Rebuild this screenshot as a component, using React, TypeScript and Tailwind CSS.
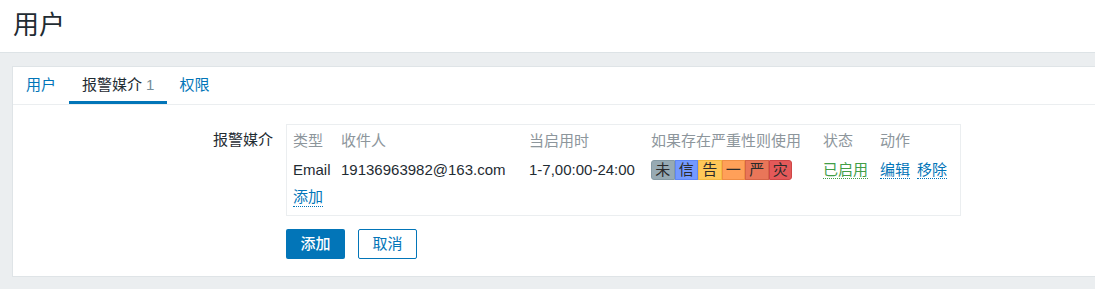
import React from 'react';

const severities = [
  { label: '未', bg: 'bg-[#97aab3]', border: 'border-[#859aa4]' },
  { label: '信', bg: 'bg-[#7499ff]', border: 'border-[#5f87f5]' },
  { label: '告', bg: 'bg-[#ffc859]', border: 'border-[#f2b840]' },
  { label: '一', bg: 'bg-[#ffa059]', border: 'border-[#f08e45]' },
  { label: '严', bg: 'bg-[#e97659]', border: 'border-[#d66447]' },
  { label: '灾', bg: 'bg-[#e45959]', border: 'border-[#cf4646]' },
];

const font = { fontFamily: '"Liberation Sans", Arial, "Noto Sans CJK SC", sans-serif' };

export default function App() {
  return (
    <div style={font} className="w-[1095px] h-[289px] bg-[#ebeef0] text-[15px] text-[#1f2c33] overflow-hidden">
      <header className="h-[53px] bg-white border-b border-[#dde3e6] flex items-center pl-[13px]">
        <h1 className="text-[26px] leading-none text-[#1f2c33] -mt-[2px]">用户</h1>
      </header>

      <div className="mt-[13px] ml-[12px] h-[211px] bg-white border border-[#dfe4e7] border-r-0">
        <div className="flex h-[38px] border-b border-[#ebeef0]">
          <a className="px-[13px] flex items-center text-[#0275b8] pb-[1px]">用户</a>
          <a className="px-[13px] flex items-center border-b-[3px] border-[#0275b8] pt-[3px] text-[#1f2c33]">
            报警媒介 <span className="ml-[4px] text-[#768d99]">1</span>
          </a>
          <a className="px-[12px] flex items-center text-[#0275b8] pb-[1px]">权限</a>
        </div>

        <div className="flex pt-[19px]">
          <div className="w-[260px] text-right pt-[5px]">报警媒介</div>
          <div className="ml-[13px]">
            <div className="w-[675px] h-[92px] border border-[#ebeef0] px-[6px]">
              <div className="grid grid-cols-[48px_188px_122px_172px_57px_auto] h-[30px] items-center pt-[2px] text-[#8d969c]">
                <span>类型</span>
                <span>收件人</span>
                <span>当启用时</span>
                <span>如果存在严重性则使用</span>
                <span>状态</span>
                <span>动作</span>
              </div>
              <div className="grid grid-cols-[48px_188px_122px_172px_57px_auto] h-[30px] items-center">
                <span>Email</span>
                <span>19136963982@163.com</span>
                <span>1-7,00:00-24:00</span>
                <span className="flex">
                  {severities.map((s, i) => (
                    <span
                      key={s.label}
                      className={`h-[20px] w-[23.5px] flex items-center justify-center border ${s.bg} ${s.border} ${i === 0 ? 'rounded-l-[3px]' : ''} ${i === severities.length - 1 ? 'rounded-r-[3px]' : ''} text-[#2b2b2b]`}
                    >
                      {s.label}
                    </span>
                  ))}
                </span>
                <span>
                  <a className="text-[#429e47] border-b border-dotted border-[#429e47] leading-[17px]">已启用</a>
                </span>
                <span className="flex gap-[7px]">
                  <a className="text-[#0275b8] border-b border-dotted border-[#0275b8] leading-[17px]">编辑</a>
                  <a className="text-[#0275b8] border-b border-dotted border-[#0275b8] leading-[17px]">移除</a>
                </span>
              </div>
              <div className="h-[24px] flex items-center">
                <a className="text-[#0275b8] border-b border-dotted border-[#0275b8] leading-[18px]">添加</a>
              </div>
            </div>

            <div className="flex gap-[13px] mt-[13px]">
              <button className="w-[59px] h-[30px] rounded-[2px] bg-[#0275b8] text-white text-[15px] font-medium">添加</button>
              <button className="w-[59px] h-[30px] rounded-[2px] border border-[#0275b8] text-[#0275b8] bg-white text-[15px]">取消</button>
            </div>
          </div>
        </div>
      </div>
    </div>
  );
}
